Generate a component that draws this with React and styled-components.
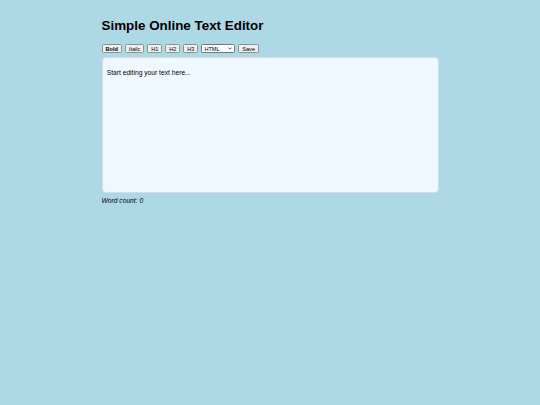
import React, { useState } from "react";
import styled, { createGlobalStyle } from "styled-components";

const GlobalStyle = createGlobalStyle`
  body {
    margin: 0;
    background: #add8e6;
    font-family: "Liberation Sans", Arial, sans-serif;
  }
`;

const Page = styled.div`
  width: 337px;
  margin: 0 auto;
  padding-top: 18px;
`;

const Title = styled.h1`
  font-size: 13.4px;
  font-weight: bold;
  line-height: 15.4px;
  margin: 0 0 10.8px;
  color: #000;
`;

const Toolbar = styled.div`
  display: flex;
  align-items: center;
  gap: 2.9px;
  height: 9px;
`;

const Button = styled.button`
  font-family: "Liberation Sans", Arial, sans-serif;
  font-size: 5.6px;
  font-weight: ${(p) => (p.$bold ? "bold" : "normal")};
  font-style: ${(p) => (p.$italic ? "italic" : "normal")};
  height: 8.8px;
  line-height: 6px;
  padding: 0 3px;
  background: #efefef;
  color: #000;
  border: 0.8px solid #8f8f8f;
  border-radius: 1.3px;
  cursor: pointer;
`;

const SelectWrap = styled.span`
  position: relative;
  display: inline-flex;
`;

const Select = styled.select`
  appearance: none;
  font-family: "Liberation Sans", Arial, sans-serif;
  font-size: 5.6px;
  width: 34px;
  height: 8.8px;
  padding: 0 0 0 2px;
  line-height: 6px;
  background: #fff;
  color: #000;
  border: 0.8px solid #767676;
  border-radius: 1.3px;
`;

const Chevron = styled.svg`
  position: absolute;
  right: 3px;
  top: 2.8px;
  width: 4px;
  height: 3px;
  pointer-events: none;
`;

const Editor = styled.div`
  box-sizing: border-box;
  margin-top: 4.2px;
  height: 136px;
  background: #f0f8ff;
  border: 0.8px solid #d3dde2;
  border-radius: 4px;
  padding: 4.2px;
  font-size: 6.7px;
  line-height: 7.7px;
  color: #000;
  outline: none;

  p {
    margin: 6.6px 0;
  }
`;

const WordCount = styled.p`
  margin: 3.8px 0 0;
  font-size: 6.7px;
  line-height: 7.7px;
  font-style: italic;
  color: #000;
`;

export default function App() {
  const [mode, setMode] = useState("html");
  return (
    <>
      <GlobalStyle />
      <Page>
        <Title>Simple Online Text Editor</Title>
        <Toolbar>
          <Button $bold>Bold</Button>
          <Button $italic>Italic</Button>
          <Button>H1</Button>
          <Button>H2</Button>
          <Button>H3</Button>
          <SelectWrap>
            <Select value={mode} onChange={(e) => setMode(e.target.value)}>
              <option value="html">HTML</option>
              <option value="markdown">Markdown</option>
              <option value="text">Plain Text</option>
            </Select>
            <Chevron viewBox="0 0 8 6">
              <path d="M1 1.2 L4 4.4 L7 1.2" fill="none" stroke="#222" strokeWidth="1.4" />
            </Chevron>
          </SelectWrap>
          <Button>Save</Button>
        </Toolbar>
        <Editor contentEditable suppressContentEditableWarning>
          <p>Start editing your text here...</p>
        </Editor>
        <WordCount>Word count: 0</WordCount>
      </Page>
    </>
  );
}
